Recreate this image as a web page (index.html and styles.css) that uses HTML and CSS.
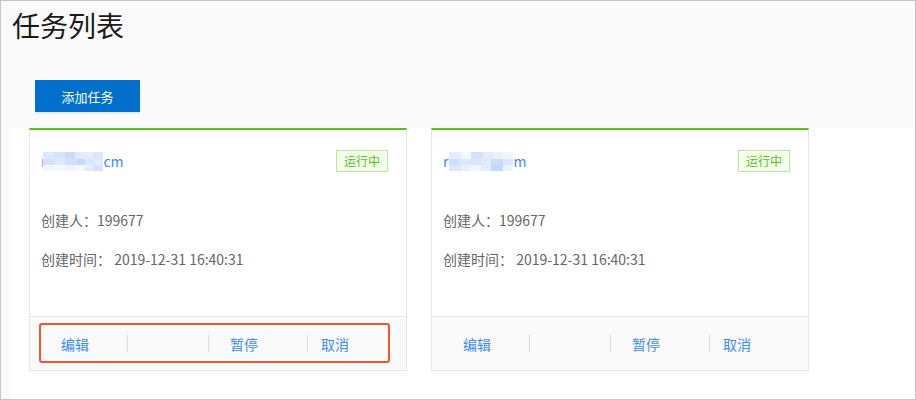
FILE: index.html
```html
<!DOCTYPE html>
<html lang="zh-CN">
<head>
<meta charset="utf-8">
<title>任务列表</title>
<link rel="stylesheet" href="styles.css">
</head>
<body>
<div class="frame">
  <header class="page-head">
    <h1 class="title">任务列表</h1>
    <button class="btn-primary" type="button">添加任务</button>
  </header>
  <main class="content">
    <div class="cards">
      <section class="card">
        <div class="card-body">
          <div class="card-head">
            <span class="email">r<svg class="mosaic m1" width="60" height="19" viewBox="0 0 60 19"><rect x="0" y="0" width="60" height="19" fill="#eef4fd"/><rect x="0" y="0" width="10" height="7" fill="#dce8fb"/><rect x="10" y="0" width="12" height="7" fill="#d6e5fc"/><rect x="22" y="0" width="10" height="7" fill="#c8dcfb"/><rect x="32" y="0" width="10" height="7" fill="#dfeafc"/><rect x="42" y="0" width="8" height="7" fill="#e6eefd"/><rect x="50" y="0" width="10" height="7" fill="#dbe7fb"/><rect x="0" y="7" width="12" height="6" fill="#d2e2fb"/><rect x="12" y="7" width="10" height="6" fill="#dde9fc"/><rect x="22" y="7" width="12" height="6" fill="#cfe0fb"/><rect x="34" y="7" width="8" height="6" fill="#c5dafb"/><rect x="42" y="7" width="10" height="6" fill="#d8e6fc"/><rect x="52" y="7" width="8" height="6" fill="#e2ecfd"/><rect x="0" y="13" width="10" height="6" fill="#f2f6fe"/><rect x="10" y="13" width="12" height="6" fill="#f5f8fe"/><rect x="22" y="13" width="10" height="6" fill="#eef4fd"/><rect x="32" y="13" width="10" height="6" fill="#f4f7fe"/><rect x="42" y="13" width="8" height="6" fill="#e4edfc"/><rect x="50" y="13" width="10" height="6" fill="#d5e4fb"/></svg>cm</span>
            <span class="tag">运行中</span>
          </div>
          <p class="info">创建人：199677</p>
          <p class="info info-time">创建时间： 2019-12-31 16:40:31</p>
        </div>
        <div class="card-foot">
          <div class="actions">
            <a class="act act-first">编辑</a>
            <span class="sep"></span>
            <span class="blank"></span>
            <span class="sep"></span>
            <a class="act act-mid">暂停</a>
            <span class="sep"></span>
            <a class="act act-last">取消</a>
          </div>
          <div class="highlight"></div>
        </div>
      </section>
      <section class="card">
        <div class="card-body">
          <div class="card-head">
            <span class="email">r<svg class="mosaic m2" width="64" height="19" viewBox="0 0 64 19"><rect x="0" y="0" width="64" height="19" fill="#eef4fd"/><rect x="0" y="0" width="12" height="7" fill="#e4edfd"/><rect x="12" y="0" width="10" height="7" fill="#f3f7fe"/><rect x="22" y="0" width="12" height="7" fill="#d3e3fb"/><rect x="34" y="0" width="10" height="7" fill="#e2ecfd"/><rect x="44" y="0" width="10" height="7" fill="#eaf1fd"/><rect x="54" y="0" width="10" height="7" fill="#f0f5fe"/><rect x="0" y="7" width="10" height="6" fill="#cfe0fb"/><rect x="10" y="7" width="12" height="6" fill="#dbe7fc"/><rect x="22" y="7" width="10" height="6" fill="#d8e6fc"/><rect x="32" y="7" width="10" height="6" fill="#e0eafc"/><rect x="42" y="7" width="12" height="6" fill="#c9dcfb"/><rect x="54" y="7" width="10" height="6" fill="#dde8fc"/><rect x="0" y="13" width="12" height="6" fill="#dce8fc"/><rect x="12" y="13" width="10" height="6" fill="#eaf1fd"/><rect x="22" y="13" width="10" height="6" fill="#f2f6fe"/><rect x="32" y="13" width="10" height="6" fill="#e3ecfd"/><rect x="42" y="13" width="12" height="6" fill="#c3d8fa"/><rect x="54" y="13" width="10" height="6" fill="#eef4fd"/></svg>m</span>
            <span class="tag">运行中</span>
          </div>
          <p class="info">创建人：199677</p>
          <p class="info info-time">创建时间： 2019-12-31 16:40:31</p>
        </div>
        <div class="card-foot">
          <div class="actions">
            <a class="act act-first">编辑</a>
            <span class="sep"></span>
            <span class="blank"></span>
            <span class="sep"></span>
            <a class="act act-mid">暂停</a>
            <span class="sep"></span>
            <a class="act act-last">取消</a>
          </div>
        </div>
      </section>
    </div>
  </main>
</div>
</body>
</html>
```

FILE: styles.css
```css
* {
  box-sizing: border-box;
}

html, body {
  margin: 0;
  padding: 0;
  background: #ffffff;
}

body {
  font-family: "Noto Sans CJK SC", "Noto Sans", sans-serif;
  color: #333;
}

.frame {
  width: 916px;
  height: 400px;
  border: 1px solid #c6c6c6;
  background: #fafafa;
  padding-left: 10px;
  overflow: hidden;
}

.page-head {
  padding-top: 4px;
  display: flex;
  flex-direction: column;
  align-items: flex-start;
}

.title {
  margin: 0 0 0 1px;
  font-size: 28px;
  line-height: 40px;
  font-weight: normal;
  color: #1b1b1b;
  letter-spacing: 0;
}

.btn-primary {
  margin: 35px 0 0 24px;
  width: 105px;
  height: 32px;
  border: 0;
  padding: 0;
  background: #0070cc;
  color: #fff;
  font-family: inherit;
  font-size: 13px;
  box-shadow: 0 2px 1px rgba(0, 0, 0, 0.06);
}

.content {
  margin-top: 16px;
  background: #fff;
  height: 300px;
  padding-left: 18px;
}

.cards {
  display: flex;
  gap: 24px;
}

.card {
  width: 378px;
  height: 243px;
  border: 1px solid #e6e6e6;
  border-top: 2px solid #52c41a;
  background: #fff;
  display: flex;
  flex-direction: column;
}

.card-body {
  height: 186px;
  padding: 20px 18px 0 11px;
}

.card-head {
  display: flex;
  justify-content: space-between;
  align-items: center;
  height: 22px;
}

.email {
  color: #3d8af7;
  font-size: 14px;
  line-height: 22px;
  display: inline-flex;
  align-items: center;
}

.mosaic {
  display: block;
}

.m1 {
  margin-left: -3px;
}

.m2 {
  margin-left: 1px;
}

.tag {
  height: 22px;
  width: 52px;
  border: 1px solid #b7eb8f;
  background: #f6ffed;
  color: #52c41a;
  font-size: 12px;
  line-height: 20px;
  text-align: center;
}

.info {
  margin: 38px 0 0 0;
  font-size: 14px;
  line-height: 20px;
  color: #666;
}

.info-time {
  margin-top: 19px;
}

.card-foot {
  position: relative;
  flex: 1;
  border-top: 1px solid #e6e6e6;
  background: #fafafa;
}

.actions {
  display: flex;
  align-items: center;
  height: 100%;
  padding-left: 31px;
}

.act {
  font-size: 14px;
  color: #3d8af7;
  line-height: 20px;
}

.act-first {
  width: 66px;
}

.sep {
  width: 1px;
  height: 17px;
  background: #dadada;
}

.blank {
  width: 80px;
}

.act-mid {
  width: 98px;
  padding-left: 21px;
}

.act-last {
  padding-left: 13px;
}

.highlight {
  position: absolute;
  left: 9px;
  top: 6px;
  width: 351px;
  height: 40px;
  border: 2px solid #f4552f;
  border-radius: 3px;
}
```
